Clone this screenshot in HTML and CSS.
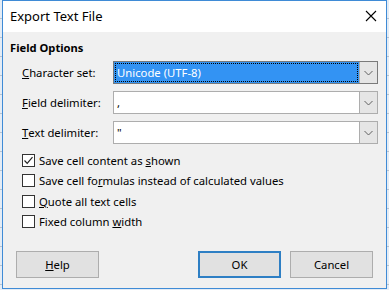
FILE: index.html
```html
<!DOCTYPE html>
<html lang="en">
<head>
<meta charset="UTF-8">
<meta name="viewport" content="width=device-width, initial-scale=1.0">
<title>Export Text File</title>
<link rel="stylesheet" href="styles.css">
</head>
<body>

<div class="window">
    <!-- title bar -->
    <div class="titlebar">
        <span class="title">Export Text File</span>
        <svg class="close" width="12" height="12" viewBox="0 0 12 12">
            <path d="M1 1 L11 11 M11 1 L1 11" stroke="#000" stroke-width="1.1" fill="none"/>
        </svg>
    </div>

    <div class="content">
        <div class="section-title">Field Options</div>

        <div class="fields">
            <label class="field-label"><u>C</u>haracter set:</label>
            <div class="combo focused">
                <div class="combo-value"><span class="focus-rect">Unicode (UTF-8)</span></div>
                <div class="combo-btn">
                    <svg width="9" height="6" viewBox="0 0 9 6"><path d="M0.5 1 L4.5 5 L8.5 1" stroke="#606060" fill="none"/></svg>
                </div>
            </div>

            <label class="field-label"><u>F</u>ield delimiter:</label>
            <div class="combo">
                <div class="combo-value">,</div>
                <div class="combo-btn">
                    <svg width="9" height="6" viewBox="0 0 9 6"><path d="M0.5 1 L4.5 5 L8.5 1" stroke="#606060" fill="none"/></svg>
                </div>
            </div>

            <label class="field-label"><u>T</u>ext delimiter:</label>
            <div class="combo">
                <div class="combo-value">"</div>
                <div class="combo-btn">
                    <svg width="9" height="6" viewBox="0 0 9 6"><path d="M0.5 1 L4.5 5 L8.5 1" stroke="#606060" fill="none"/></svg>
                </div>
            </div>
        </div>

        <div class="checks">
            <div class="check-row">
                <span class="checkbox">
                    <svg width="11" height="11" viewBox="0 0 11 11"><path d="M1.5 5.5 L4.2 8.3 L9.5 2.2" stroke="#222" stroke-width="1.2" fill="none"/></svg>
                </span>
                <span>Save cell content as <u>s</u>hown</span>
            </div>
            <div class="check-row">
                <span class="checkbox"></span>
                <span>Save cell fo<u>r</u>mulas instead of calculated values</span>
            </div>
            <div class="check-row">
                <span class="checkbox"></span>
                <span><u>Q</u>uote all text cells</span>
            </div>
            <div class="check-row">
                <span class="checkbox"></span>
                <span>Fixed column <u>w</u>idth</span>
            </div>
        </div>

        <div class="buttons">
            <button class="btn"><u>H</u>elp</button>
            <div class="spacer"></div>
            <button class="btn default">OK</button>
            <button class="btn">Cancel</button>
        </div>
    </div>
</div>

</body>
</html>
```

FILE: styles.css
```css
/* dialog over a spreadsheet */
body {
    margin: 0;
    font-family: "Noto Sans", "Open Sans", sans-serif;
    font-size: 11.3px;
    color: #000;
    background-color: #e4ecf5;
    background-image: repeating-linear-gradient(to bottom, transparent 0, transparent 18px, #b9c3cf 18px, #b9c3cf 19px);
    height: 290px;
    overflow: hidden;
}
.window {
    margin-left: 2px;
    width: 383px;
    height: 287px;
    border: 1px solid #3f8bd6;
    background: #f0f0f0;
    display: flex;
    flex-direction: column;
}
.titlebar {
    height: 31px;
    background: #fff;
    display: flex;
    align-items: center;
    justify-content: space-between;
    padding: 0 9px 0 7px;
}
.title {
    font-size: 13px;
    margin-top: -1px;
}
.close {
    margin-top: -1px;
}
.content {
    flex: 1;
    padding: 8px 8px 0 7px;
}
.section-title {
    font-weight: bold;
    font-size: 11.2px;
    line-height: 16px;
}
.fields {
    display: grid;
    grid-template-columns: 91px 1fr;
    row-gap: 7px;
    margin-top: 5px;
    margin-left: 12px;
}
.field-label {
    display: flex;
    align-items: center;
}
.combo {
    height: 21px;
    border: 1px solid #adadad;
    background: #fff;
    display: flex;
}
.combo.focused {
    border-color: #7a7a7a;
}
.combo-value {
    flex: 1;
    display: flex;
    align-items: center;
    padding-left: 3px;
}
.focused .combo-value {
    background: #3393f3;
    color: #fff;
    padding: 1px;
}
.focus-rect {
    flex: 1;
    height: 100%;
    display: flex;
    align-items: center;
    padding-left: 2px;
    outline: 1px dotted #000;
    outline-offset: -1px;
}
.combo-btn {
    width: 17px;
    background: #e5e5e5;
    border-left: 1px solid #adadad;
    display: flex;
    align-items: center;
    justify-content: center;
}
.checks {
    margin-top: 6px;
    margin-left: 12px;
}
.check-row {
    height: 20.5px;
    display: flex;
    align-items: center;
}
.checkbox {
    width: 11px;
    height: 11px;
    border: 1px solid #333;
    background: #fff;
    margin-right: 4px;
    display: flex;
}
.buttons {
    display: flex;
    gap: 9px;
    margin-top: 19px;
    padding: 0 5px 0 6px;
}
.spacer {
    flex: 1;
}
.btn {
    width: 83px;
    height: 27px;
    font-family: inherit;
    font-size: 11.3px;
    color: #000;
    background: #e1e1e1;
    border: 1px solid #adadad;
    padding: 0;
}
.btn.default {
    border: 2px solid #2e7fc4;
}
```
